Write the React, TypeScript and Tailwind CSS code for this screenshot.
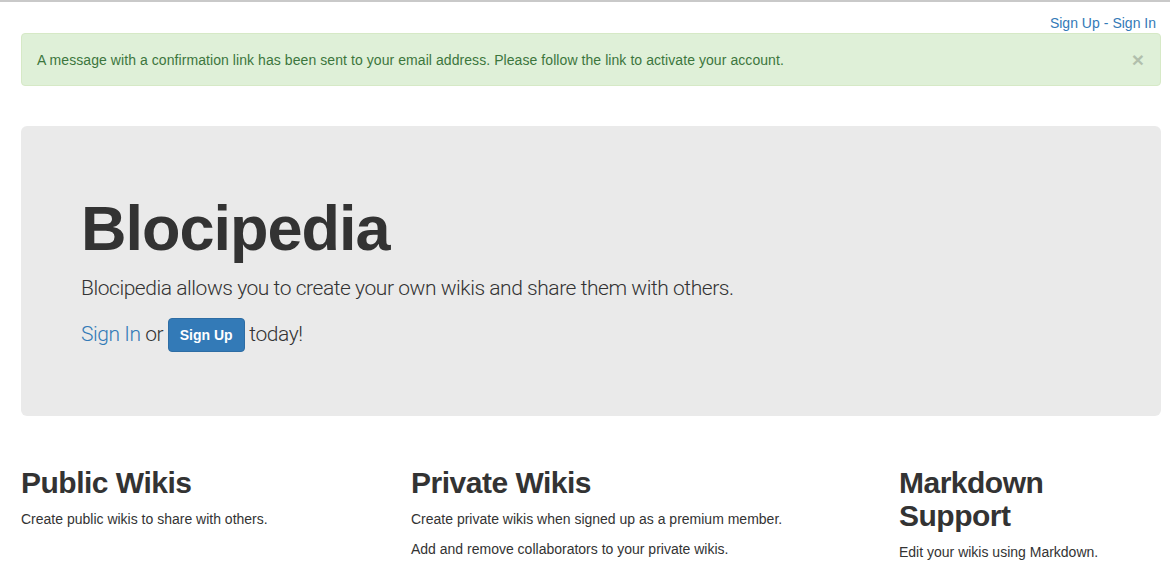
import React from 'react';

const features = [
  { title: 'Public Wikis', lines: ['Create public wikis to share with others.'] },
  {
    title: 'Private Wikis',
    lines: ['Create private wikis when signed up as a premium member.', 'Add and remove collaborators to your private wikis.'],
  },
  { title: 'Markdown Support', lines: ['Edit your wikis using Markdown.'] },
];

export default function App() {
  return (
    <div className="min-h-screen w-full bg-white border-t-2 border-[#c9c9c9] font-['Liberation_Sans',Arial,sans-serif] text-[14px] leading-[20px] text-[#333]">
      <div className="pl-[21px] pr-[9px]">
        <div className="flex justify-end pt-[11px] pr-[5px]">
          <a href="#" className="text-[#337ab7]">Sign Up</a>
          <span className="px-[4px] text-[#337ab7]">-</span>
          <a href="#" className="text-[#337ab7]">Sign In</a>
        </div>

        <div className="mb-[40px] flex items-center justify-between rounded-[4px] border border-[#d6e9c6] bg-[#dff0d8] py-[15px] pl-[15px] pr-[16px] text-[#3c763d]">
          <span className="tracking-[0.07px]">A message with a confirmation link has been sent to your email address. Please follow the link to activate your account.</span>
          <span className="text-[21px] font-bold leading-none text-black opacity-20">×</span>
        </div>

        <section className="mb-[30px] rounded-[6px] bg-[#eaeaea] px-[60px] pt-[48px] pb-[64px]">
          <h1 className="mt-[20px] mb-[10px] text-[63px] font-bold leading-[69px] tracking-[-1px] text-[#333]">Blocipedia</h1>
          <p className="mb-[15px] font-['Roboto',sans-serif] text-[21px] font-light leading-[30px] tracking-[-0.45px] text-[#333]">
            Blocipedia allows you to create your own wikis and share them with others.
          </p>
          <p className="font-['Roboto',sans-serif] text-[21px] font-light leading-[30px] tracking-[-0.45px] text-[#333]">
            <a href="#" className="text-[#337ab7]">Sign In</a> or{' '}
            <button className="h-[34px] rounded-[4px] border border-[#2e6da4] bg-[#337ab7] px-[11px] align-middle font-['Liberation_Sans',Arial,sans-serif] text-[14px] font-bold leading-[20px] tracking-normal text-white">
              Sign Up
            </button>{' '}
            today!
          </p>
        </section>

        <div className="grid grid-cols-[390px_488px_1fr]">
          {features.map((f) => (
            <div key={f.title} className="pr-[30px]">
              <h2 className="mt-[20px] mb-[10px] text-[30px] font-bold leading-[33px] tracking-[-0.5px] text-[#333]">{f.title}</h2>
              {f.lines.map((l) => (
                <p key={l} className="mb-[10px]">{l}</p>
              ))}
            </div>
          ))}
        </div>
      </div>
    </div>
  );
}
